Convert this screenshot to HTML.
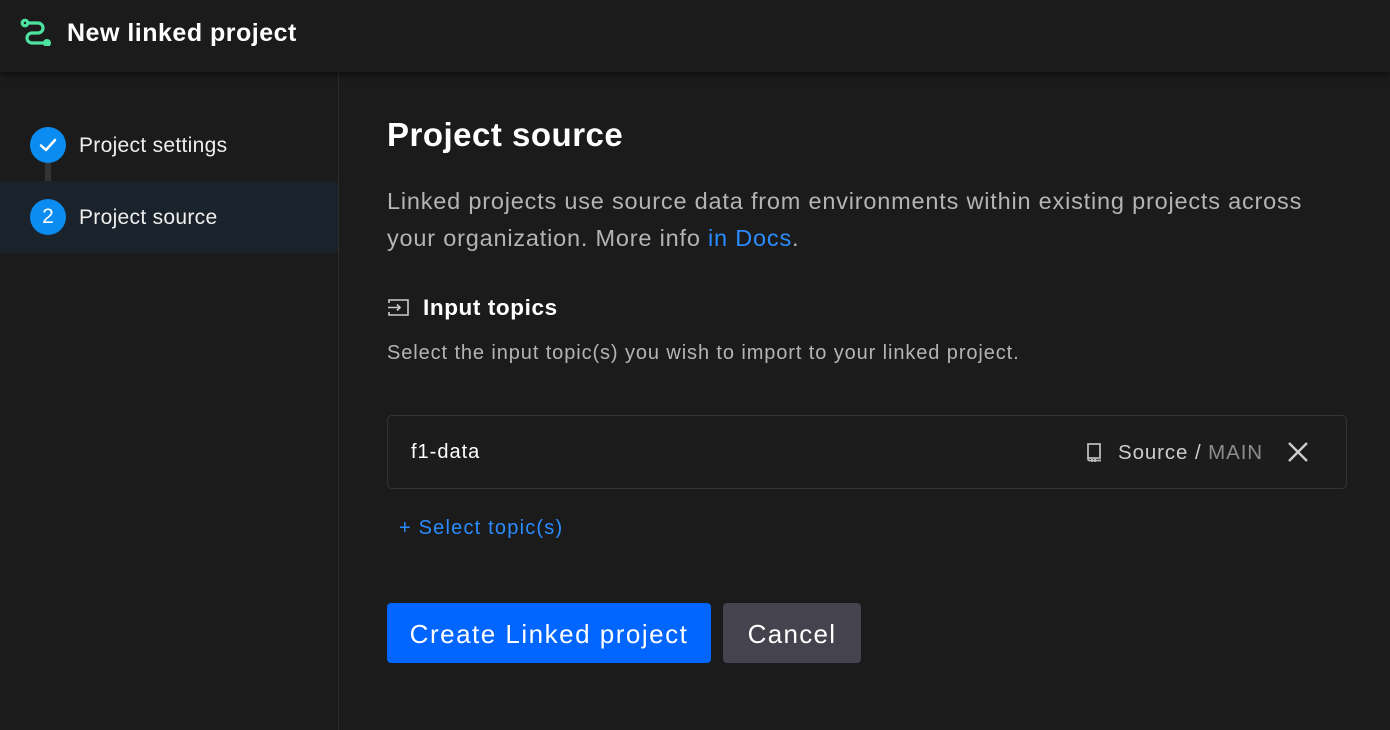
<!DOCTYPE html>
<html><head><style>
*{margin:0;padding:0;box-sizing:border-box}
body{width:1390px;height:730px;background:#1b1b1b;font-family:"Liberation Sans",sans-serif;color:#fff;position:relative;overflow:hidden}
.hdr{position:absolute;left:0;top:0;width:1390px;height:72px;background:#1b1b1b;box-shadow:0 2px 6px rgba(0,0,0,.6);z-index:2}
.hdr .t{position:absolute;left:67px;top:19px;font-size:25px;font-weight:bold;letter-spacing:0.5px}
.side{position:absolute;left:0;top:72px;width:339px;height:658px;border-right:1px solid #2c2c2c}
.step{position:absolute;left:0;width:338px;height:72px}
.circ{position:absolute;left:30px;width:36px;height:36px;border-radius:50%;background:#0a8cf0;color:#fff;font-size:21px;text-align:center;line-height:36px}
.lbl{position:absolute;left:79px;font-size:21px;color:#eee;letter-spacing:0.3px}
.abs{position:absolute}
</style></head><body>
<div class="hdr">
<svg class="abs" style="left:20px;top:18px" width="32" height="28" viewBox="0 0 32 28"><g fill="none" stroke="#4ee2a0" stroke-width="3.2" stroke-linecap="round"><circle cx="5" cy="5" r="2.8"/><path d="M8 5 H18 a5 5 0 0 1 0 10 H12 a5 5 0 0 0 0 10 H24"/></g><circle cx="27" cy="25" r="4" fill="#4ee2a0"/></svg>
<div class="t">New linked project</div>
</div>
<div class="side">
<div class="abs" style="left:45px;top:88px;width:6px;height:60px;background:#333"></div>
<div class="step" style="top:109px;background:#1a222c;border-radius:0 4px 4px 0"></div>
<div class="circ" style="top:55px"><svg width="36" height="36" viewBox="0 0 36 36"><path d="M11 18.5 L16 23 L25 13" fill="none" stroke="#fff" stroke-width="2.5" stroke-linecap="round" stroke-linejoin="round"/></svg></div>
<div class="lbl" style="top:62px">Project settings</div>
<div class="circ" style="top:127px">2</div>
<div class="lbl" style="top:134px">Project source</div>
</div>
<div class="abs" style="left:387px;top:116px;font-size:33px;font-weight:bold;letter-spacing:0.5px">Project source</div>
<div class="abs" style="left:387px;top:183px;font-size:23.5px;line-height:37px;color:#b4b4b4;width:940px;letter-spacing:0.8px">Linked projects use source data from environments within existing projects across your organization. More info <span style="color:#2a8cff">in Docs</span>.</div>
<svg class="abs" style="left:387px;top:298px" width="24" height="20" viewBox="0 0 24 20"><path d="M2 5V2H21V17H2V14M1 9.5H13M10 6.5L13 9.5L10 12.5" fill="none" stroke="#ccc" stroke-width="1.6"/></svg>
<div class="abs" style="left:423px;top:295px;font-size:22.5px;font-weight:bold;letter-spacing:0.6px">Input topics</div>
<div class="abs" style="left:387px;top:342px;font-size:20px;color:#b4b4b4;letter-spacing:0.9px">Select the input topic(s) you wish to import to your linked project.</div>
<div class="abs" style="left:387px;top:415px;width:960px;height:74px;border:1px solid #333;border-radius:5px;background:#1c1c1c"></div>
<div class="abs" style="left:411px;top:441px;font-size:20px;letter-spacing:1px">f1-data</div>
<svg class="abs" style="left:1085px;top:442px" width="18" height="22" viewBox="0 0 18 22"><path d="M3 17V2H15V16H3M3 17a1.5 1.5 0 0 0 1.5 1.5H16M7 17v3M10 17v3" fill="none" stroke="#bbb" stroke-width="1.8"/></svg>
<div class="abs" style="left:1118px;top:441px;font-size:20.5px;color:#ccc;letter-spacing:0.9px">Source / <span style="color:#8c8c8c">MAIN</span></div>
<svg class="abs" style="left:1287px;top:441px" width="22" height="22" viewBox="0 0 22 22"><path d="M2 2L20 20M20 2L2 20" stroke="#ccc" stroke-width="2.4"/></svg>
<div class="abs" style="left:399px;top:517px;font-size:20px;color:#2a8cff;letter-spacing:1.2px">+ Select topic(s)</div>
<div class="abs" style="left:387px;top:603px;width:324px;height:60px;background:#0066ff;border-radius:4px;font-size:26px;text-align:center;line-height:62px;letter-spacing:1.5px">Create Linked project</div>
<div class="abs" style="left:723px;top:603px;width:138px;height:60px;background:#44434e;border-radius:4px;font-size:26px;text-align:center;line-height:62px;letter-spacing:1.3px">Cancel</div>
</body></html>
